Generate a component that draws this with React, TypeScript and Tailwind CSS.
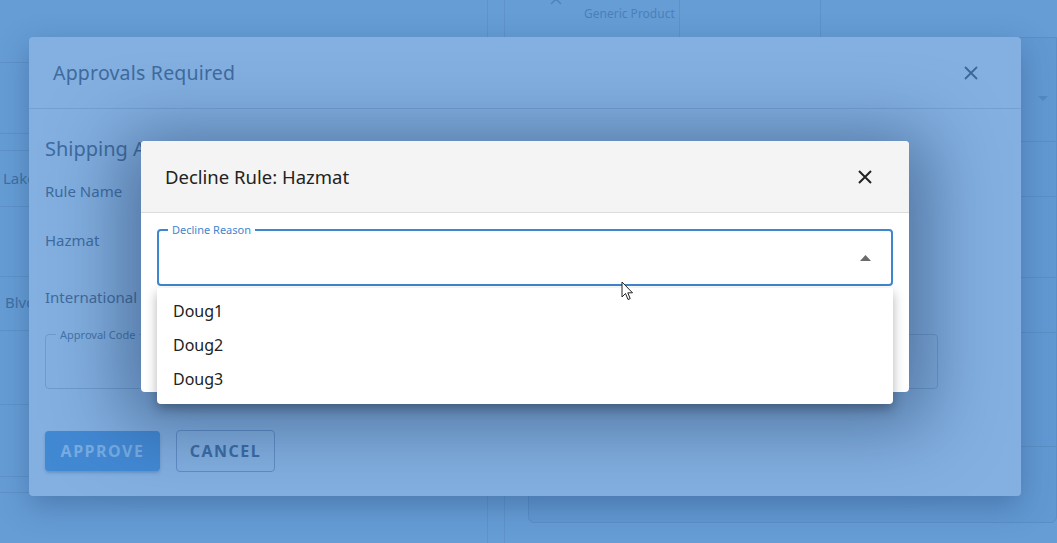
const rows = [62, 133, 150, 206, 276, 330, 404, 476, 492];

function CloseIcon(props: { className?: string; stroke: string; width: number }) {
  return (
    <svg className={props.className} width="14" height="14" viewBox="0 0 14 14">
      <path d="M1 1 L13 13 M13 1 L1 13" stroke={props.stroke} strokeWidth={props.width} fill="none" />
    </svg>
  );
}

function Cursor() {
  return (
    <svg className="absolute left-[621px] top-[281px]" width="13" height="20" viewBox="0 0 13 20">
      <path
        d="M1 1 L1 16 L4.5 12.5 L7 18.5 L9.2 17.6 L6.8 11.8 L11.5 11.8 Z"
        fill="white"
        stroke="#222"
        strokeWidth="1"
        strokeLinejoin="round"
      />
    </svg>
  );
}

function BackgroundPage() {
  return (
    <div className="absolute inset-0 bg-[#669dd5] flex">
      <div className="relative w-[488px] h-full border-r border-[#5f93c9]">
        {rows.map((y) => (
          <div key={y} className="absolute left-0 right-0 border-t border-[#5e92c8]" style={{ top: y }} />
        ))}
        <div className="absolute left-[3px] top-[167px] text-[15px] text-[#3f6fa3] font-['Noto_Sans',sans-serif]">Lake</div>
        <div className="absolute left-[5px] top-[291px] text-[15px] text-[#3f6fa3] font-['Noto_Sans',sans-serif]">Blvd</div>
      </div>
      <div className="w-[17px] h-full border-r border-[#5f93c9]" />
      <div className="flex-1 flex flex-col">
        <div className="relative h-[37px] flex">
          <div className="w-[23px]" />
          <div className="relative w-[152px] border-r border-[#5e92c8] pl-[56px] pt-[5px] text-[12px] text-[#4b80bb] font-['Noto_Sans',sans-serif]">
            <svg className="absolute left-[22px] top-[-3px]" width="12" height="8" viewBox="0 0 12 8">
              <path d="M1 7 L6 2 L11 7" fill="none" stroke="#4e84bf" strokeWidth="1.5" />
            </svg>
            Generic Product
          </div>
          <div className="w-[141px] border-r border-[#5e92c8]" />
        </div>
        <div className="ml-[23px] flex-1 mb-[20px] rounded-b-[6px] border border-[#5a8fc5] bg-[#6299d2] relative">
          {[140, 195, 276, 331, 445].map((y) => (
            <div key={y} className="absolute left-[490px] right-0 border-t border-[#5a8fc5]" style={{ top: y - 37 }} />
          ))}
          <svg className="absolute left-[509px] top-[58px]" width="10" height="6" viewBox="0 0 10 6">
            <path d="M0 0 L10 0 L5 5 Z" fill="#5289c4" />
          </svg>
        </div>
      </div>
    </div>
  );
}

function ApprovalsModal() {
  return (
    <div className="absolute left-[29px] top-[37px] w-[992px] h-[459px] rounded-[4px] bg-[#83b0e1] shadow-[0_10px_30px_rgba(30,60,110,0.35)] flex flex-col font-['Noto_Sans',sans-serif]">
      <div className="h-[72px] flex items-center justify-between pl-[24px] pr-[43px] border-b border-[#74a0d3]">
        <div className="text-[19.5px] text-[#3f6b9e] tracking-[0.2px]">Approvals Required</div>
        <CloseIcon stroke="#3b679b" width={1.8} />
      </div>
      <div className="flex flex-col px-[16px] pt-[26px]">
        <div className="text-[20px] leading-[28px] text-[#3f6b9e]">Shipping Approval</div>
        <div className="mt-[17px] text-[15px] text-[#3f6b9e]">Rule Name</div>
        <div className="mt-[26px] text-[15px] text-[#3f6b9e]">Hazmat</div>
        <div className="mt-[35px] text-[15px] text-[#3f6b9e]">International</div>
        <div className="relative mt-[25px] h-[55px] w-[893px] rounded-[4px] border border-[#6d9bcf]">
          <span className="absolute left-[10px] top-[-8px] px-[4px] bg-[#83b0e1] text-[11px] text-[#4473a8]">Approval Code</span>
        </div>
        <div className="mt-[41px] flex gap-[16px] items-center">
          <div className="w-[115px] h-[40px] rounded-[4px] bg-[#4289d4] shadow-[0_2px_3px_rgba(40,80,140,0.3)] flex items-center justify-center text-[16px] font-bold tracking-[1.5px] text-[#78ace3]">
            APPROVE
          </div>
          <div className="w-[99px] h-[42px] rounded-[4px] border border-[#5f8ec5] flex items-center justify-center text-[16px] font-bold tracking-[1.5px] text-[#3b6ba3]">
            CANCEL
          </div>
        </div>
      </div>
    </div>
  );
}

function DeclineModal() {
  return (
    <div className="absolute left-[141px] top-[141px] w-[768px] h-[251px] rounded-[4px] bg-white shadow-[0_14px_70px_20px_rgba(30,55,95,0.5)] flex flex-col font-['Noto_Sans',sans-serif]">
      <div className="h-[72px] rounded-t-[4px] bg-[#f4f4f4] border-b border-[#dcdcdc] flex items-center justify-between pl-[24px] pr-[37px]">
        <div className="text-[18.5px] text-[#222]">Decline Rule: Hazmat</div>
        <CloseIcon stroke="#222" width={2} />
      </div>
      <div className="px-[16px] pt-[16px]">
        <div className="relative h-[57px] rounded-[4px] border-2 border-[#3f86d0] flex items-center justify-end pr-[20px]">
          <span className="absolute left-[9px] top-[-9px] px-[4px] bg-white text-[11px] text-[#3f86d0]">Decline Reason</span>
          <svg width="11" height="6" viewBox="0 0 11 6">
            <path d="M0 6 L5.5 0 L11 6 Z" fill="#6b6b6b" />
          </svg>
        </div>
      </div>
    </div>
  );
}

function Menu() {
  return (
    <div className="absolute left-[157px] top-[288px] w-[736px] rounded-b-[4px] bg-white shadow-[0_5px_12px_rgba(0,0,0,0.3)] pt-[6px] pb-[8px] flex flex-col font-['Noto_Sans',sans-serif]">
      {["Doug1", "Doug2", "Doug3"].map((d) => (
        <div key={d} className="h-[34px] flex items-center px-[16px] text-[16px] text-[#222]">
          {d}
        </div>
      ))}
    </div>
  );
}

export default function App() {
  return (
    <div className="relative w-[1057px] h-[543px] overflow-hidden">
      <BackgroundPage />
      <ApprovalsModal />
      <DeclineModal />
      <Menu />
      <Cursor />
    </div>
  );
}
